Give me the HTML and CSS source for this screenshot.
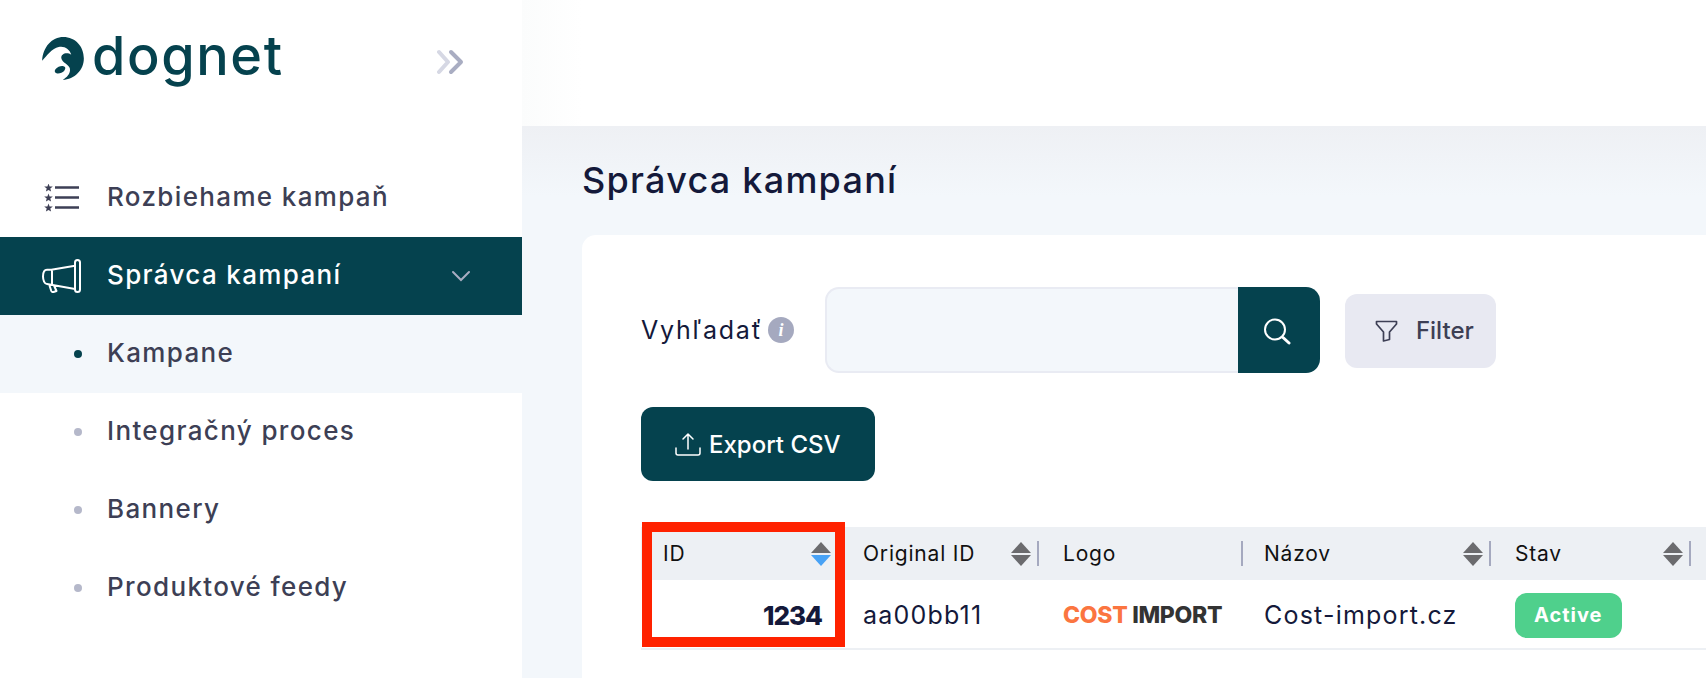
FILE: index.html
```html
<!DOCTYPE html>
<html lang="en">

<head>
    <meta charset="UTF-8">
    <meta name="viewport" content="width=device-width,initial-scale=1.0">
    <title>Správca kampaní</title>
    <link rel="stylesheet" href="styles.css">
</head>

<body>
    <div class="app">
        <!-- Left menu -->
        <aside class="sidebar">
            <div class="brand">
                <div class="logo">
                    <svg class="logo-mark" viewBox="0 0 126 130" width="42" height="43">
                        <path fill="#05424e" d="M0 72C2 30 30 0 64 0C100 0 126 28 126 65C126 100 98 128 62 130C74 122 86 112 84 96C82 82 60 78 58 64C56 52 74 44 88 54C84 36 66 26 50 30C30 34 14 56 0 72Z" />
                        <ellipse fill="#05424e" cx="54" cy="99" rx="17" ry="10" transform="rotate(-25 54 99)" />
                    </svg>
                    <span class="logo-text">dognet</span>
                </div>
                <svg class="collapse" viewBox="0 0 28 26" width="28" height="26" fill="none" stroke-width="4" stroke-linecap="round" stroke-linejoin="round">
                    <path stroke="#d6d8e4" d="M2 3L11 13L2 23" />
                    <path stroke="#a9adc2" d="M14 3L24 13L14 23" />
                </svg>
            </div>
            <nav class="menu">
                <a class="menu-item">
                    <svg class="menu-icon" viewBox="0 0 36 28" width="36" height="28">
                        <path fill="#3d3f55" transform="translate(4.500 4)" d="M0 -4.500L1.100 -1.500L4.300 -1.400L1.800 0.600L2.600 3.600L0 1.900L-2.600 3.600L-1.800 0.600L-4.300 -1.400L-1.100 -1.500Z" />
                        <path fill="#3d3f55" transform="translate(4.500 14)" d="M0 -4.500L1.100 -1.500L4.300 -1.400L1.800 0.600L2.600 3.600L0 1.900L-2.600 3.600L-1.800 0.600L-4.300 -1.400L-1.100 -1.500Z" />
                        <path fill="#3d3f55" transform="translate(4.500 24)" d="M0 -4.500L1.100 -1.500L4.300 -1.400L1.800 0.600L2.600 3.600L0 1.900L-2.600 3.600L-1.800 0.600L-4.300 -1.400L-1.100 -1.500Z" />
                        <path stroke="#3d3f55" stroke-width="2.400" d="M11 3.500H35M11 13.500H35M11 23.500H35" />
                    </svg>
                    <span>Rozbiehame kampaň</span>
                </a>
                <a class="menu-item active">
                    <svg class="menu-icon" viewBox="0 0 39 34" width="39" height="34" fill="none" stroke="#fff" stroke-width="2" stroke-linejoin="round">
                        <rect x="33" y="1" width="5" height="32" rx="2.500" />
                        <path d="M33 6.700L9.300 10.700H5C2 10.700 1 14 1 17.500C1 21 2.500 25 5 25L33 30M10 10.700V25M7 25L9.300 32C9.700 33 10.500 33.200 11.500 33L14.500 32L12 26.500" />
                    </svg>
                    <span>Správca kampaní</span>
                    <svg class="chevron" viewBox="0 0 20 12" width="20" height="12" fill="none" stroke="#a9adc2" stroke-width="2" stroke-linecap="round">
                        <path d="M2 2L10 10L18 2" />
                    </svg>
                </a>
                <a class="sub-item current"><i class="dot"></i><span>Kampane</span></a>
                <a class="sub-item"><i class="dot"></i><span>Integračný proces</span></a>
                <a class="sub-item"><i class="dot"></i><span>Bannery</span></a>
                <a class="sub-item"><i class="dot"></i><span>Produktové feedy</span></a>
            </nav>
        </aside>

        <div class="main">
            <header class="topbar"></header>
            <section class="content">
                <h1 class="page-title">Správca kampaní</h1>
                <div class="card">
                    <div class="search-row">
                        <label class="search-label">Vyhľadať</label>
                        <span class="info">i</span>
                        <div class="search">
                            <div class="search-input"></div>
                            <button class="search-btn">
                                <svg viewBox="0 0 30 30" width="30" height="30" fill="none" stroke="#fff" stroke-width="2" stroke-linecap="round">
                                    <circle cx="11" cy="14.500" r="10" />
                                    <path stroke-width="3" d="M19 22.500L25 28" />
                                </svg>
                            </button>
                        </div>
                        <button class="filter-btn">
                            <svg viewBox="0 0 24 24" width="24" height="24" fill="none" stroke="#3d3f55" stroke-width="1.700" stroke-linejoin="round">
                                <path d="M2.500 2.500H22.500V5L15.500 13V20.500L9.500 22V13L2.500 5Z" />
                            </svg>
                            Filter
                        </button>
                    </div>
                    <button class="export-btn">
                        <svg viewBox="0 0 26 24" width="26" height="24" fill="none" stroke="#fff" stroke-width="1.500" stroke-linecap="round" stroke-linejoin="round">
                            <path d="M13 17V2M8 7L13 2L18 7M1 16V21C1 22 2 23 3 23H23C24 23 25 22 25 21V16" />
                        </svg>
                        Export CSV
                    </button>
                    <table class="table">
                        <thead>
                            <tr>
                                <th class="col-id">
                                    <div class="th-in">ID<span class="sort"><i class="up"></i><i class="down on"></i></span></div>
                                </th>
                                <th class="col-orig">
                                    <div class="th-in">Original ID<span class="sort"><i class="up"></i><i class="down"></i></span><b class="sep"></b></div>
                                </th>
                                <th class="col-logo">
                                    <div class="th-in">Logo<b class="sep"></b></div>
                                </th>
                                <th class="col-name">
                                    <div class="th-in">Názov<span class="sort"><i class="up"></i><i class="down"></i></span><b class="sep"></b></div>
                                </th>
                                <th class="col-state">
                                    <div class="th-in">Stav<span class="sort"><i class="up"></i><i class="down"></i></span><b class="sep"></b></div>
                                </th>
                                <th></th>
                            </tr>
                        </thead>
                        <tbody>
                            <tr>
                                <td class="cell-id">1234</td>
                                <td>aa00bb11</td>
                                <td class="cell-logo"><span class="cost">COST</span> <span class="import">IMPORT</span></td>
                                <td class="cell-name">Cost-import.cz</td>
                                <td><span class="badge">Active</span></td>
                                <td></td>
                            </tr>
                        </tbody>
                    </table>
                    <div class="highlight"></div>
                </div>
            </section>
        </div>
    </div>
</body>

</html>
```

FILE: styles.css
```css
* {
    padding: 0;
    margin: 0;
    box-sizing: border-box;
}

html,
body {
    height: 100%;
    overflow: hidden;
}

body {
    font-family: "Inter", "Open Sans", sans-serif;
    color: #3d3f55;
    background: #fff;
}

.app {
    display: flex;
    height: 678px;
    overflow: hidden;
}

/* Left menu */
.sidebar {
    width: 522px;
    flex: none;
    background: #fff;
}

.brand {
    display: flex;
    align-items: center;
    justify-content: space-between;
    height: 128px;
    padding: 0 57px 11px 42px;
}

.logo {
    display: flex;
    align-items: center;
    gap: 8px;
}

.logo-text {
    font-size: 54px;
    font-weight: 500;
    line-height: 1;
    letter-spacing: 1.6px;
    color: #05424e;
    margin-top: -5px;
}

.collapse {
    margin-top: 6px;
}

.menu {
    margin-top: 31px;
}

.menu-item,
.sub-item {
    display: flex;
    align-items: center;
    height: 78px;
    font-size: 26px;
    font-weight: 500;
    letter-spacing: 1.35px;
}

.menu-item span,
.sub-item span {
    margin-top: -3px;
}

.menu-item {
    padding-left: 44px;
}

.menu-icon {
    flex: none;
    margin-right: 27px;
}

.menu-item.active {
    padding-left: 42px;
    color: #fff;
    background: #05424e;
}

.menu-item.active .menu-icon {
    margin-right: 26px;
}

.chevron {
    margin-left: auto;
    margin-right: 51px;
}

.sub-item {
    padding-left: 74px;
}

.sub-item.current {
    background: #f3f7fb;
}

.dot {
    width: 8px;
    height: 8px;
    margin-right: 25px;
    border-radius: 50%;
    background: #b5b8ca;
}

.current .dot {
    background: #05424e;
}

/* Main part */
.main {
    flex: 1;
    min-width: 0;
    display: flex;
    flex-direction: column;
}

.topbar {
    height: 126px;
    flex: none;
    background: linear-gradient(to right, #fbfcfc, #fff 60px);
}

.content {
    flex: 1;
    min-height: 0;
    display: flex;
    flex-direction: column;
    padding: 34px 0 0 60px;
    background: linear-gradient(#eef0f4, #f3f7fb 70px);
}

.page-title {
    font-size: 36px;
    font-weight: 500;
    line-height: 40px;
    letter-spacing: 1.25px;
    color: #14193a;
}

.card {
    position: relative;
    flex: 1;
    min-height: 0;
    margin-top: 35px;
    padding: 52px 0 0 59px;
    border-radius: 14px 0 0 0;
    background: #fff;
}

.search-row {
    display: flex;
    align-items: center;
}

.search-label {
    font-size: 25px;
    letter-spacing: 1.8px;
    color: #14193a;
}

.info {
    width: 26px;
    height: 26px;
    margin-left: 5px;
    border-radius: 50%;
    background: #a5a9bf;
    color: #fff;
    font: italic 700 18px/26px "Liberation Serif", serif;
    text-align: center;
}

.search {
    display: flex;
    width: 495px;
    height: 86px;
    margin-left: 31px;
}

.search-input {
    flex: 1;
    border: 2px solid #e9ebf3;
    border-right: 0;
    border-radius: 14px 0 0 14px;
    background: #f3f7fb;
}

.search-btn {
    width: 82px;
    border: none;
    border-radius: 0 14px 14px 0;
    background: #05424e;
}

.search-btn svg {
    display: block;
    margin-left: 26px;
}

.filter-btn {
    display: flex;
    align-items: center;
    gap: 18px;
    height: 74px;
    margin: 1px 0 0 25px;
    padding: 0 22px 0 29px;
    border: none;
    border-radius: 12px;
    background: #e8e9f2;
    color: #3d3f55;
    font: 500 24px "Inter", sans-serif;
}

.export-btn {
    display: flex;
    align-items: center;
    gap: 8px;
    height: 74px;
    margin-top: 34px;
    padding: 0 34px;
    border: none;
    border-radius: 12px;
    background: #05424e;
    color: #fff;
    font: 500 24px "Inter", sans-serif;
}

/* Table */
.table {
    width: 100%;
    margin-top: 46px;
    border-collapse: collapse;
    table-layout: fixed;
}

.table th {
    height: 53px;
    padding: 0;
    background: #edf0f4;
    font-size: 21px;
    font-weight: 400;
    letter-spacing: 0.8px;
    color: #111;
    text-align: left;
}

.col-id {
    width: 199px;
}

.col-orig {
    width: 200px;
}

.col-logo {
    width: 204px;
}

.col-name {
    width: 248px;
}

.col-state {
    width: 200px;
}

.th-in {
    position: relative;
    display: flex;
    align-items: center;
    height: 53px;
    padding-left: 23px;
}

.col-id .th-in {
    padding-left: 22px;
}

.col-name .th-in {
    padding-left: 20px;
}

.sort {
    display: flex;
    flex-direction: column;
    gap: 2px;
    margin-left: auto;
    margin-right: 9px;
}

.sort i {
    display: block;
    width: 0;
    height: 0;
    border-left: 10px solid transparent;
    border-right: 10px solid transparent;
}

.sort .up {
    border-bottom: 11px solid #6b6b6e;
}

.sort .down {
    border-top: 11px solid #6b6b6e;
}

.sort .down.on {
    border-top-color: #48a2f5;
}

.sep {
    position: absolute;
    right: 1px;
    top: 14px;
    width: 2px;
    height: 25px;
    background: #a5a9bf;
}

.table td {
    height: 69px;
    padding: 2px 0 0 23px;
    border-bottom: 2px solid #edf0f4;
    font-size: 25px;
    letter-spacing: 1.2px;
    color: #14193a;
}

.table .cell-name {
    padding-left: 20px;
}

.table .cell-id {
    padding: 2px 18px 0 0;
    font-size: 26px;
    font-weight: 800;
    letter-spacing: -1px;
    text-align: right;
}

.table .cell-logo {
    font-size: 23px;
    font-weight: 800;
    letter-spacing: -0.3px;
}

.cost {
    color: #fb7540;
}

.import {
    color: #333;
}

.badge {
    display: inline-block;
    padding: 0 19px;
    border-radius: 12px;
    background: #4fd08c;
    color: #fff;
    font-size: 20px;
    font-weight: 700;
    letter-spacing: 1px;
    line-height: 45px;
}

/* Red box put on top of the screenshot */
.highlight {
    position: absolute;
    left: 60px;
    top: 287px;
    width: 203px;
    height: 125px;
    border: 10px solid #ff2200;
}
```
